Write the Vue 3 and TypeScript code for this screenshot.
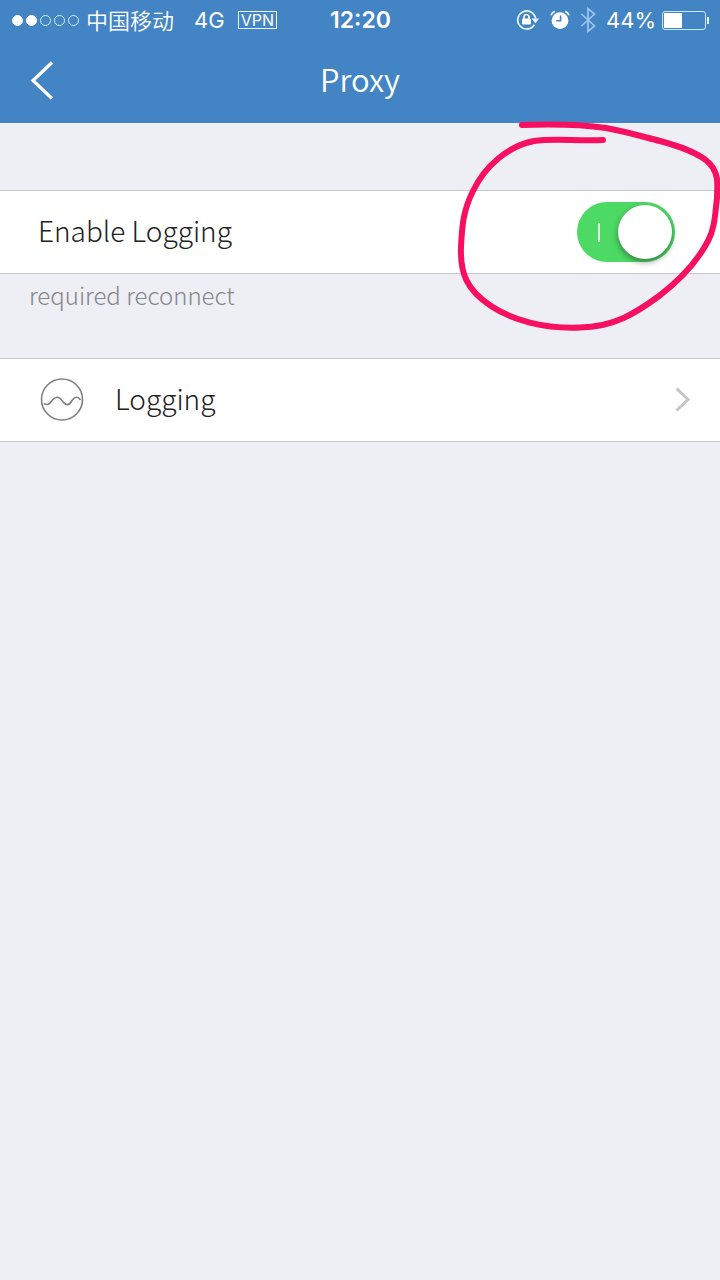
<script setup lang="ts">
import { ref } from 'vue'

const loggingEnabled = ref(true)
const signalDots: boolean[] = [true, true, false, false, false]
const batteryLevel = 44
</script>

<template>
  <div class="screen">
    <header class="top">
      <div class="status">
        <div class="status-left">
          <span class="signal" role="img" aria-label="Signal 2 of 5">
            <i v-for="(on, n) in signalDots" :key="n" class="dot" :class="{ on }"></i>
          </span>
          <span class="carrier">中国移动</span>
          <span class="network">4G</span>
          <span class="vpn">VPN</span>
        </div>
        <span class="clock">12:20</span>
        <div class="status-right">
          <svg class="lock" viewBox="0 0 24 22" aria-hidden="true">
            <path d="M18.4 15.7A9 9 0 1 1 19.6 9.5" fill="none" stroke="#e6faff" stroke-width="1.7" />
            <path d="M15.6 9.4h7.6l-3.8 4.8z" fill="#e6faff" />
            <rect x="6" y="9.4" width="9" height="6.2" rx="1" fill="#fff" />
            <path d="M8 10V8a2.5 2.5 0 0 1 5 0V10" fill="none" stroke="#fff" stroke-width="1.6" />
          </svg>
          <svg class="alarm" viewBox="0 0 20 20" aria-hidden="true">
            <circle cx="10" cy="10.6" r="8.4" fill="#fff" />
            <path d="M10.6 5.6v5.2H6.2" fill="none" stroke="#4284c4" stroke-width="1.6" />
            <path d="M1 5.2A6 6 0 0 1 4.8 1.4M15.2 1.4A6 6 0 0 1 19 5.2" fill="none" stroke="#e6faff" stroke-width="1.8" />
          </svg>
          <svg class="bluetooth" viewBox="0 0 16 26" aria-hidden="true">
            <path d="M1.5 7l13 12L8 24.4V1.6L14.500 7l-13 12" fill="none" stroke="#9cc6ef" stroke-width="1.7" />
          </svg>
          <span class="percent">{{ batteryLevel }}%</span>
          <span class="battery" aria-hidden="true">
            <span class="cell"><i class="charge" :style="{ width: batteryLevel + '%' }"></i></span>
            <i class="cap"></i>
          </span>
        </div>
      </div>
      <nav class="nav">
        <button class="back" type="button" aria-label="Back">
          <svg viewBox="0 0 24 40" aria-hidden="true">
            <path d="M22 1.500L3 19.500L22 37.500" fill="none" stroke="#fff" stroke-width="3.2" />
          </svg>
        </button>
        <h1>Proxy</h1>
      </nav>
    </header>

    <main>
      <div class="row toggle-row">
        <label class="row-label" for="enable-logging">Enable Logging</label>
        <span class="switch">
          <input id="enable-logging" v-model="loggingEnabled" type="checkbox" role="switch" />
        </span>
        <svg class="scribble" viewBox="0 0 280 230" aria-hidden="true">
          <path
            d="M82 15C112 14 145 15 166 18C188 22 204 27 220 31C242 37 266 45 273 58C279 67 277 77 277 88C275 104 275 118 268 131C258 150 240 170 219 186C196 203 174 217 140 217.500C104 219 72 210 51 196C27 180 20 164 21 137C22 116 23 101 33 81C45 56 68 36 94 31C113 28 134 31 163 30"
          />
        </svg>
      </div>
      <p class="note">required reconnect</p>

      <a class="row link-row" href="#logging">
        <svg class="wave" viewBox="0 0 44 44" aria-hidden="true">
          <circle cx="22" cy="21.500" r="20.500" />
          <path d="M4 25.500C7 27.500 9.500 26.500 12 22.500C15 18.500 19 18 22 22.500C25.500 28 29 28 32 22.500C34.500 18.500 38 18 40.500 22" />
        </svg>
        <span class="row-label link-label">Logging</span>
        <svg class="chevron" viewBox="0 0 16 26" aria-hidden="true">
          <path d="M1.500 1.500L13 12.500L1.500 23.500" />
        </svg>
      </a>
    </main>
  </div>
</template>

<style>
body {
  background: #eeeef5;
}
</style>

<style scoped>
.screen {
  min-height: 100vh;
  overflow: hidden;
  background: #eeeef5;
  font-family: "Noto Sans CJK SC", "Noto Sans", sans-serif;
  color: #222;
}
.top {
  height: 123px;
  background: #4284c4;
  color: #fff;
}
.status {
  display: grid;
  grid-template-columns: 1fr auto 1fr;
  align-items: center;
  height: 40px;
  padding: 0 11px 0 12px;
  font-family: Inter, "Noto Sans CJK SC", sans-serif;
  font-size: 22px;
  line-height: 40px;
}
.status-left,
.status-right {
  display: flex;
  align-items: center;
}
.status-right {
  justify-content: flex-end;
}
.signal {
  display: flex;
  gap: 3px;
}
.dot {
  box-sizing: border-box;
  width: 11px;
  height: 11px;
  border: 1px solid #d3f1ff;
  border-radius: 50%;
}
.dot.on {
  background: #fff;
  border-color: #fff;
}
.carrier {
  margin-left: 7px;
  font-family: "Noto Sans CJK SC", sans-serif;
  font-size: 22px;
  font-weight: 350;
  line-height: 36px;
  padding-bottom: 2px;
}
.network {
  margin-left: 20px;
}
.vpn {
  margin-left: 13px;
  padding: 0 2px;
  border: 1px solid #e6faff;
  font-size: 16px;
  line-height: 16px;
}
.clock {
  font-size: 23px;
  font-weight: 600;
}
.lock {
  width: 24px;
  height: 22px;
}
.alarm {
  width: 20px;
  height: 20px;
  margin-left: 10px;
}
.bluetooth {
  width: 16px;
  height: 26px;
  margin-left: 10px;
}
.percent {
  margin-left: 10px;
}
.battery {
  display: flex;
  align-items: center;
  margin-left: 6px;
}
.cell {
  box-sizing: border-box;
  display: flex;
  width: 44px;
  height: 19px;
  padding: 1px;
  border: 1px solid #c8e8ff;
  border-radius: 3px;
}
.charge {
  background: #fff;
}
.cap {
  width: 2px;
  height: 7px;
  margin-left: 1px;
  background: #e6faff;
}
.nav {
  display: grid;
  grid-template-columns: 80px 1fr 80px;
  align-items: center;
  height: 82px;
}
.back {
  display: flex;
  padding: 0 0 0 30px;
  border: 0;
  background: none;
}
.back svg {
  width: 24px;
  height: 40px;
}
h1 {
  margin: 0;
  padding-bottom: 4px;
  font-size: 31px;
  font-weight: 350;
  line-height: 40px;
  text-align: center;
}
main {
  padding-top: 67px;
}
.row {
  display: flex;
  align-items: center;
  height: 82px;
  border-top: 1px solid #c9c8d0;
  border-bottom: 1px solid #c9c8d0;
  background: #fff;
  font-size: 28px;
  font-weight: 300;
}
.row-label {
  padding-bottom: 4px;
  line-height: 40px;
}
.toggle-row {
  position: relative;
  justify-content: space-between;
  padding: 0 45px 0 38px;
}
.switch {
  display: flex;
}
.switch input {
  appearance: none;
  display: flex;
  align-items: center;
  width: 98px;
  height: 60px;
  margin: 0;
  padding: 3px;
  box-sizing: border-box;
  border-radius: 30px;
  background: #d8d8dc;
}
.switch input::after {
  content: "";
  width: 54px;
  height: 54px;
  border-radius: 50%;
  background: #fff;
  box-shadow: 0 3px 6px rgba(0, 0, 0, 0.4);
}
.switch input:checked {
  justify-content: space-between;
  background: #4cd964;
}
.switch input:checked::before {
  content: "";
  width: 2px;
  height: 19px;
  margin-left: 18px;
  background: #eaffea;
}
.scribble {
  position: absolute;
  top: -81px;
  right: 0;
  width: 280px;
  height: 230px;
  overflow: visible;
  pointer-events: none;
}
.scribble path {
  fill: none;
  stroke: #f70f60;
  stroke-width: 6;
  stroke-linecap: round;
  stroke-linejoin: round;
}
.note {
  margin: 0;
  height: 84px;
  padding: 3px 29px 0;
  box-sizing: border-box;
  color: #85858a;
  font-size: 24px;
  font-weight: 300;
  line-height: 36px;
}
.link-row {
  padding: 0 29px 0 40px;
  color: inherit;
  text-decoration: none;
}
.wave {
  width: 44px;
  height: 44px;
  fill: none;
  stroke: #808080;
  stroke-width: 1.6;
}
.link-label {
  flex: 1;
  margin-left: 31px;
}
.chevron {
  width: 16px;
  height: 26px;
  fill: none;
  stroke: #c5c5ca;
  stroke-width: 3;
}
</style>
